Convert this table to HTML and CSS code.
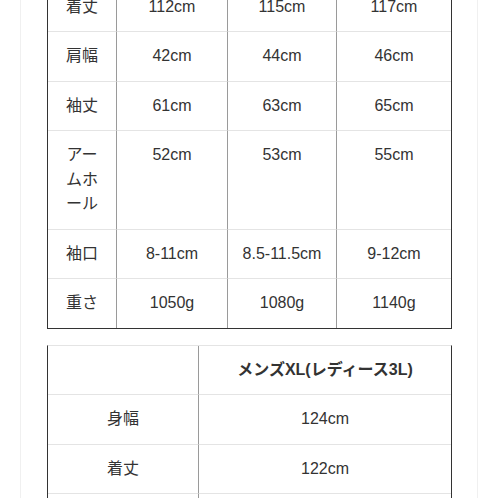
FILE: index.html
```html
<!DOCTYPE html>
<html lang="ja">
<head>
<meta charset="utf-8">
<link rel="stylesheet" href="styles.css">
</head>
<body>
<div class="page">
  <table class="size-table t1">
    <colgroup>
      <col class="c1"><col class="c2"><col class="c3"><col class="c4">
    </colgroup>
    <tbody>
      <tr><td>着丈</td><td>112cm</td><td>115cm</td><td>117cm</td></tr>
      <tr><td>肩幅</td><td>42cm</td><td>44cm</td><td>46cm</td></tr>
      <tr><td>袖丈</td><td>61cm</td><td>63cm</td><td>65cm</td></tr>
      <tr><td class="label-wrap">アームホール</td><td>52cm</td><td>53cm</td><td>55cm</td></tr>
      <tr><td>袖口</td><td>8-11cm</td><td>8.5-11.5cm</td><td>9-12cm</td></tr>
      <tr><td>重さ</td><td>1050g</td><td>1080g</td><td>1140g</td></tr>
    </tbody>
  </table>

  <table class="size-table t2">
    <colgroup>
      <col class="d1"><col class="d2">
    </colgroup>
    <thead>
      <tr><th></th><th>メンズXL(レディース3L)</th></tr>
    </thead>
    <tbody>
      <tr><td>身幅</td><td>124cm</td></tr>
      <tr><td>着丈</td><td>122cm</td></tr>
      <tr><td>肩幅</td><td>48cm</td></tr>
    </tbody>
  </table>
</div>
</body>
</html>
```

FILE: styles.css
```css
html, body {
  margin: 0;
  padding: 0;
  background: #ffffff;
}

body {
  font-family: "Liberation Sans", Arial, "Noto Sans CJK JP", sans-serif;
  font-size: 16px;
  color: #333333;
  overflow: hidden;
}

.page {
  margin: 0 20px;
  border-left: 1px solid #f0f0f0;
  border-right: 1px solid #f0f0f0;
  padding-left: 26px;
  min-height: 600px;
}

.size-table {
  border-collapse: separate;
  border-spacing: 0;
  table-layout: fixed;
  width: 405px;
  border-left: 1px solid #333333;
  border-right: 1px solid #333333;
  border-bottom: 1px solid #333333;
  border-top: 1px solid #e4e4e4;
}

.t1 {
  margin-top: -18.5px;
}

.t2 {
  margin-top: 16px;
}

.c1 { width: 69px; }
.c2 { width: 111px; }
.c3 { width: 109px; }
.c4 { width: 114px; }

.d1 { width: 151px; }
.d2 { width: 252px; }

.size-table td,
.size-table th {
  padding: 12px 12px;
  line-height: 24.5px;
  text-align: center;
  vertical-align: top;
  border-right: 1px solid #9a9a9a;
  border-bottom: 1px solid #e4e4e4;
  font-weight: normal;
}

.size-table th {
  font-weight: bold;
}

.size-table tr > :last-child {
  border-right: none;
}

.size-table tbody tr:last-child td {
  border-bottom: none;
}

.label-wrap {
  line-break: anywhere;
}
```
